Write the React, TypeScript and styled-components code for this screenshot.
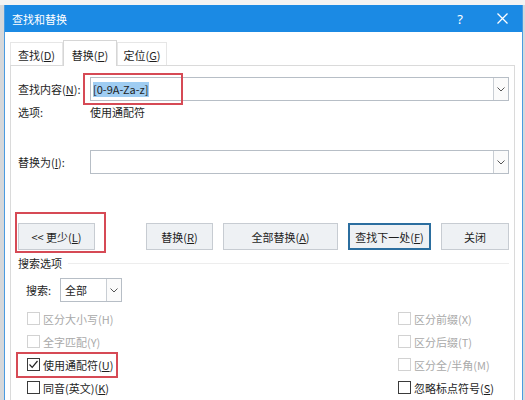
import React from 'react';
import styled, { createGlobalStyle } from 'styled-components';

const Global = createGlobalStyle`
  html, body { margin: 0; padding: 0; }
  body {
    font-family: "Noto Sans CJK SC", "Noto Sans", sans-serif;
    font-size: 11px;
    color: #1e1e1e;
    background: #e6e6e6;
  }
  u { text-underline-offset: 1px; }
`;

const Page = styled.div`
  position: relative;
  width: 525px;
  height: 400px;
  overflow: hidden;
  box-sizing: border-box;
  padding: 5px 0 0 4px;
  background: linear-gradient(#f3f3f3 0 5px, #d6d8da 5px);
`;

const Dialog = styled.div`
  width: 519px;
  height: 420px;
  box-sizing: border-box;
  border-left: 1px solid #4a9be0;
  border-right: 1px solid #4a9be0;
  background: #fff;
  display: flex;
  flex-direction: column;
`;

const TitleBar = styled.div`
  height: 27px;
  flex: none;
  background: #1b8ae4;
  color: #fff;
  display: flex;
  align-items: center;
`;

const Title = styled.div`
  padding-left: 7px;
  font-size: 11px;
  letter-spacing: 0;
`;

const TitleButton = styled.div<{ $w: number; $auto?: boolean }>`
  width: ${p => p.$w}px;
  height: 27px;
  display: flex;
  align-items: center;
  justify-content: center;
  margin-left: ${p => (p.$auto ? 'auto' : '0')};
  font-family: "Noto Sans", sans-serif;
  font-size: 13px;
  color: #fff;
`;

const Body = styled.div`
  flex: 1;
  display: flex;
  flex-direction: column;
  padding: 8px 7px 0 5px;
`;

const Tabs = styled.div`
  display: flex;
  align-items: flex-end;
  height: 25px;
  flex: none;
`;

const Tab = styled.div<{ $w: number; $active?: boolean }>`
  position: relative;
  z-index: ${p => (p.$active ? 1 : 0)};
  width: ${p => p.$w}px;
  height: ${p => (p.$active ? 26 : 23)}px;
  margin-bottom: ${p => (p.$active ? -1 : 0)}px;
  box-sizing: border-box;
  border: 1px solid ${p => (p.$active ? '#d6d6d6' : '#e6e6e6')};
  border-bottom: none;
  background: #fff;
  display: flex;
  align-items: center;
  justify-content: center;
  padding-top: ${p => (p.$active ? 3 : 1)}px;
  font-size: 11px;
`;

const Panel = styled.div`
  flex: 1;
  border: 1px solid #dadada;
  padding: 11px 5px 0 7px;
  display: flex;
  flex-direction: column;
`;

const FieldRow = styled.div<{ $h?: number; $mt?: number }>`
  display: grid;
  grid-template-columns: 72px 1fr;
  align-items: center;
  height: ${p => p.$h ?? 24}px;
  margin-top: ${p => p.$mt ?? 0}px;
`;

const Combo = styled.div`
  height: 24px;
  box-sizing: border-box;
  border: 1px solid #b7bec6;
  display: flex;
  align-items: center;
  padding-left: 2px;
  background: #fff;
`;

const Selected = styled.span`
  background: #9fcdf2;
  line-height: 15px;
  padding: 0 1px 0 0;
  font-size: 11px;
`;

const DropButton = styled.div<{ $w?: number }>`
  margin-left: auto;
  width: ${p => p.$w ?? 15}px;
  height: 22px;
  box-sizing: border-box;
  border-left: 1px solid #c9ced4;
  display: flex;
  align-items: center;
  justify-content: center;
  background: #fbfbfb;
`;

const ButtonRow = styled.div`
  display: flex;
  justify-content: space-between;
  margin-top: 49px;
`;

const ButtonGroup = styled.div`
  display: flex;
  gap: 10px;
`;

const Button = styled.div<{ $w: number; $focused?: boolean }>`
  width: ${p => p.$w}px;
  height: 27px;
  box-sizing: border-box;
  border: ${p => (p.$focused ? '2px solid #2b6e9f' : '1px solid #c7ccd2')};
  background: #eef1f4;
  display: flex;
  align-items: center;
  justify-content: center;
  font-size: 11px;
`;

const GroupHeader = styled.div`
  margin-top: 5px;
  height: 16px;
  display: flex;
  align-items: center;
  gap: 6px;
`;

const HeaderLine = styled.div`
  flex: 1;
  height: 1px;
  background: #ededed;
`;

const SearchRow = styled.div`
  margin-top: 7px;
  display: flex;
  align-items: center;
  padding-left: 8px;
`;

const SearchLabel = styled.div`
  width: 34px;
`;

const Select = styled.div`
  width: 62px;
  height: 24px;
  box-sizing: border-box;
  border: 1px solid #b7bec6;
  display: flex;
  align-items: center;
  padding-left: 4px;
`;

const Checks = styled.div`
  margin-top: 5px;
  padding-left: 9px;
  display: grid;
  grid-template-columns: 1fr 111px;
  grid-auto-rows: 23px;
`;

const CheckItem = styled.div<{ $disabled?: boolean }>`
  display: flex;
  align-items: center;
  gap: 3px;
  color: ${p => (p.$disabled ? '#a9a9a9' : '#1e1e1e')};
`;

const Box = styled.div<{ $disabled?: boolean }>`
  width: 13px;
  height: 13px;
  box-sizing: border-box;
  border: 1px solid ${p => (p.$disabled ? '#d2d2d2' : '#3a3a3a')};
  background: #fff;
  display: flex;
  align-items: center;
  justify-content: center;
`;

const Mark = styled.div<{ $x: number; $y: number; $w: number; $h: number }>`
  position: absolute;
  left: ${p => p.$x}px;
  top: ${p => p.$y}px;
  width: ${p => p.$w}px;
  height: ${p => p.$h}px;
  box-sizing: border-box;
  border: 2px solid #d64a55;
  pointer-events: none;
`;

const Chevron = () => (
  <svg width="8" height="5" viewBox="0 0 8 5">
    <path d="M0.5 0.5 L4 4 L7.5 0.5" fill="none" stroke="#555" strokeWidth="1" />
  </svg>
);

const Check = ({ label, disabled, checked }: { label: React.ReactNode; disabled?: boolean; checked?: boolean }) => (
  <CheckItem $disabled={disabled}>
    <Box $disabled={disabled}>
      {checked && (
        <svg width="11" height="11" viewBox="0 0 11 11">
          <path d="M1.5 5.5 L4.2 8.3 L9.5 2" fill="none" stroke="#222" strokeWidth="1.2" />
        </svg>
      )}
    </Box>
    <span>{label}</span>
  </CheckItem>
);

export default function App() {
  return (
    <Page>
      <Global />
      <Dialog>
        <TitleBar>
          <Title>查找和替换</Title>
          <TitleButton $w={44} $auto>?</TitleButton>
          <TitleButton $w={40}>
            <svg width="11" height="11" viewBox="0 0 11 11">
              <path d="M0.5 0.5 L10.5 10.5 M10.5 0.5 L0.5 10.5" stroke="#fff" strokeWidth="1.3" />
            </svg>
          </TitleButton>
        </TitleBar>
        <Body>
          <Tabs>
            <Tab $w={53}>查找(<u>D</u>)</Tab>
            <Tab $w={54} $active>替换(<u>P</u>)</Tab>
            <Tab $w={50}>定位(<u>G</u>)</Tab>
          </Tabs>
          <Panel>
            <FieldRow>
              <span>查找内容(<u>N</u>):</span>
              <Combo>
                <Selected>[0-9A-Za-z]</Selected>
                <DropButton><Chevron /></DropButton>
              </Combo>
            </FieldRow>
            <FieldRow $h={22}>
              <span>选项:</span>
              <span>使用通配符</span>
            </FieldRow>
            <FieldRow $mt={27}>
              <span>替换为(<u>I</u>):</span>
              <Combo>
                <DropButton><Chevron /></DropButton>
              </Combo>
            </FieldRow>
            <ButtonRow>
              <Button $w={77}>&lt;&lt; 更少(<u>L</u>)</Button>
              <ButtonGroup>
                <Button $w={67}>替换(<u>R</u>)</Button>
                <Button $w={115}>全部替换(<u>A</u>)</Button>
                <Button $w={83} $focused>查找下一处(<u>F</u>)</Button>
                <Button $w={68}>关闭</Button>
              </ButtonGroup>
            </ButtonRow>
            <GroupHeader>
              <span>搜索选项</span>
              <HeaderLine />
            </GroupHeader>
            <SearchRow>
              <SearchLabel>搜索:</SearchLabel>
              <Select>
                <span>全部</span>
                <DropButton><Chevron /></DropButton>
              </Select>
            </SearchRow>
            <Checks>
              <Check disabled label="区分大小写(H)" />
              <Check disabled label="区分前缀(X)" />
              <Check disabled label="全字匹配(Y)" />
              <Check disabled label="区分后缀(T)" />
              <Check checked label={<>使用通配符(<u>U</u>)</>} />
              <Check disabled label="区分全/半角(M)" />
              <Check label={<>同音(英文)(<u>K</u>)</>} />
              <Check label={<>忽略标点符号(<u>S</u>)</>} />
            </Checks>
          </Panel>
        </Body>
      </Dialog>
      <Mark $x={83} $y={73} $w={100} $h={32} />
      <Mark $x={15} $y={212} $w={91} $h={41} />
      <Mark $x={16} $y={352} $w={102} $h={26} />
    </Page>
  );
}
